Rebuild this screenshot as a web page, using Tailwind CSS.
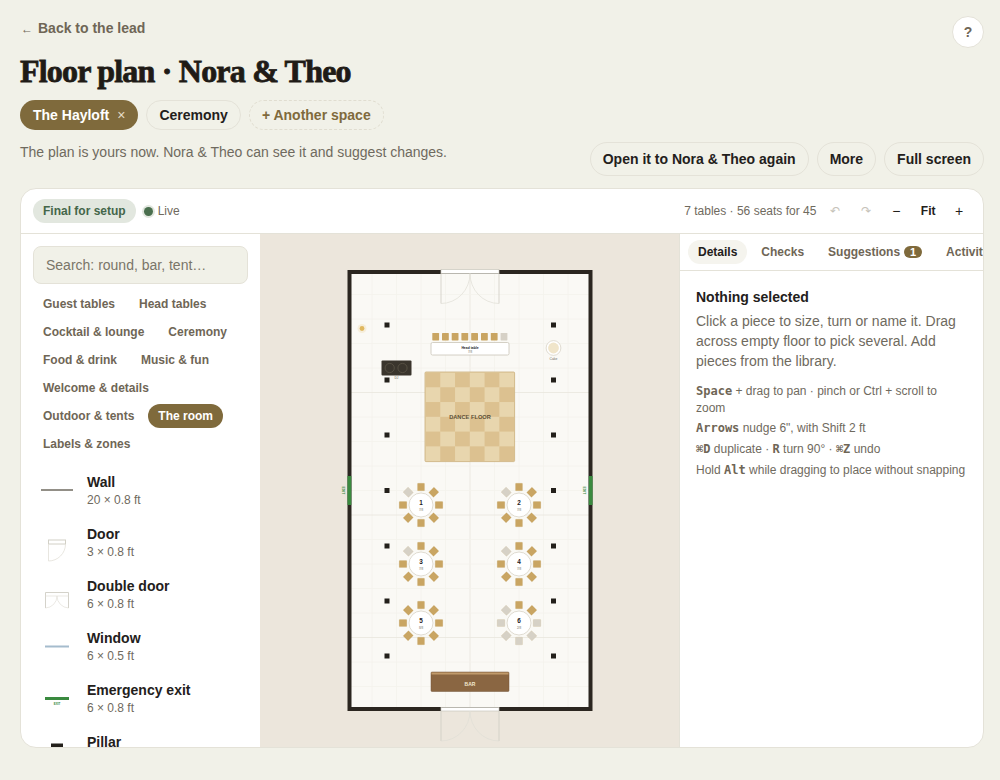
<!DOCTYPE html>
<html lang="en">
  <head>
    <meta charset="UTF-8" />
    <meta name="viewport" content="width=device-width, initial-scale=1.0" />
    <title>Floor plan · Nora &amp; Theo</title>
    <script src="https://cdn.jsdelivr.net/npm/@tailwindcss/browser@4"></script>
  </head>
  <body class="bg-[#f1f1e8] font-['Liberation_Sans',Arial,sans-serif] text-[#23201b] h-[780px] overflow-hidden">
    <div class="relative pl-5 pr-4 pt-5">
      <!-- Header -->
      <button class="absolute right-4 top-4 w-8 h-8 rounded-full bg-white border border-[#e4e2d8] text-sm font-bold text-[#6f6656]">?</button>
      <a class="flex items-center h-4 text-sm font-bold text-[#6f6656]"><span class="font-normal text-xs ml-px mr-[5px] w-3 mt-[2px]">←</span>Back to the lead</a>
      <h1 class="mt-4 h-[38px] leading-[38px] text-[32px] font-bold tracking-[-0.8px] font-['Liberation_Serif',serif] text-[#1f1b16] [-webkit-text-stroke:0.8px_#1f1b16]">Floor plan · Nora &amp; Theo</h1>
      <div class="mt-[10px] flex gap-2 h-[30px] text-sm font-bold">
        <div class="flex items-center rounded-full bg-[#7f6a3c] text-white pl-[13px] pr-[13px] gap-2">The Hayloft <span class="text-[#e4dcc8] font-normal">×</span></div>
        <div class="flex items-center rounded-full border border-[#e4e2d8] px-3">Ceremony</div>
        <div class="flex items-center rounded-full border border-dashed border-[#e0ddd0] px-3 text-[#7f6a3c]">+ Another space</div>
      </div>
      <div class="mt-3 flex justify-between items-start h-[34px]">
        <p class="text-sm leading-5 text-[#6f6a5e]">The plan is yours now. Nora &amp; Theo can see it and suggest changes.</p>
        <div class="flex gap-2 text-sm font-bold">
          <button class="h-[34px] px-3 rounded-full border border-[#e4e2d8]">Open it to Nora &amp; Theo again</button>
          <button class="h-[34px] px-3 rounded-full border border-[#e4e2d8]">More</button>
          <button class="h-[34px] px-3 rounded-full border border-[#e4e2d8]">Full screen</button>
        </div>
      </div>

      <!-- Planner card -->
      <div class="mt-3 h-[560px] bg-white rounded-2xl border border-[#e4e2d8] overflow-hidden flex flex-col">
        <div class="h-[45px] shrink-0 border-b border-[#e4e2d8] flex items-center pl-3 pr-[18px] text-xs">
          <span class="h-6 flex items-center px-[10px] rounded-full bg-[#e2e7df] text-[#44664a] font-bold">Final for setup</span>
          <span class="ml-2 w-[9px] h-[9px] rounded-full bg-[#4a6f4e] ring-2 ring-[#e2e7df]"></span>
          <span class="ml-[5px] text-[#6f6a5e]">Live</span>
          <span class="ml-auto text-[#6f6a5e]">7 tables · 56 seats for 45</span>
          <span class="ml-[13px] w-3 text-center text-[#c5c2b8]">↶</span>
          <span class="ml-[19px] w-3 text-center text-[#c5c2b8]">↷</span>
          <span class="ml-[18px] w-3 text-center text-sm">−</span>
          <span class="ml-[18.5px] font-bold">Fit</span>
          <span class="ml-[17.5px] w-3 text-center text-sm">+</span>
        </div>
        <div class="flex flex-1 min-h-0">
          <!-- Library -->
          <aside class="w-[239px] shrink-0 px-3 pt-3 overflow-hidden">
            <div class="h-[38px] w-[215px] flex items-center px-3 rounded-lg bg-[#f1f1e8] border border-[#e4e2d8] text-sm text-[#7a7568]">Search: round, bar, tent…</div>
            <div class="mt-2 flex flex-wrap gap-1 text-xs font-bold text-[#6f6656]">
              <span class="h-6 leading-6 px-[10px]">Guest tables</span>
              <span class="h-6 leading-6 px-[10px]">Head tables</span>
              <span class="h-6 leading-6 px-[10px]">Cocktail &amp; lounge</span>
              <span class="h-6 leading-6 px-[10px]">Ceremony</span>
              <span class="h-6 leading-6 px-[10px]">Food &amp; drink</span>
              <span class="h-6 leading-6 px-[10px]">Music &amp; fun</span>
              <span class="h-6 leading-6 px-[10px] mr-10">Welcome &amp; details</span>
              <span class="h-6 leading-6 px-[10px]">Outdoor &amp; tents</span>
              <span class="h-6 leading-6 px-[10px] rounded-full bg-[#7f6a3c] text-white">The room</span>
              <span class="h-6 leading-6 px-[10px] mr-10">Labels &amp; zones</span>
            </div>
            <ul class="mt-[17px] flex flex-col gap-[18px]">
              <li class="flex gap-[10px] pl-1 h-[34px]">
                <svg class="w-10 h-[34px] shrink-0 overflow-visible" viewBox="0 0 40 34"><line x1="4" y1="17" x2="36" y2="17" stroke="#77736a" stroke-width="1.6" /></svg>
                <div><div class="text-sm font-bold leading-[18px]">Wall</div><div class="mt-px text-xs leading-4 text-[#6f6a5e]">20 × 0.8 ft</div></div>
              </li>
              <li class="flex gap-[10px] pl-1 h-[34px]">
                <svg class="w-10 h-[34px] shrink-0 overflow-visible" viewBox="0 0 40 34"><rect x="11.5" y="15" width="17" height="4" fill="#fff" stroke="#d2d0c6" /><path d="M11.5 19V36M11.5 36A17 17 0 0 0 28.5 19" fill="none" stroke="#e2e0d8" stroke-width="0.8" /></svg>
                <div><div class="text-sm font-bold leading-[18px]">Door</div><div class="mt-px text-xs leading-4 text-[#6f6a5e]">3 × 0.8 ft</div></div>
              </li>
              <li class="flex gap-[10px] pl-1 h-[34px]">
                <svg class="w-10 h-[34px] shrink-0 overflow-visible" viewBox="0 0 40 34"><path d="M8.5 15.5H31.5M8.5 15.5V31M31.5 15.5V31" fill="none" stroke="#c9c7bd" stroke-width="0.8" /><path d="M8.5 19H31.5" fill="none" stroke="#e2e0d8" stroke-width="0.7" /><path d="M8.5 31A12 12 0 0 0 20 19A12 12 0 0 0 31.5 31" fill="none" stroke="#e2e0d8" stroke-width="0.7" /></svg>
                <div><div class="text-sm font-bold leading-[18px]">Double door</div><div class="mt-px text-xs leading-4 text-[#6f6a5e]">6 × 0.8 ft</div></div>
              </li>
              <li class="flex gap-[10px] pl-1 h-[34px]">
                <svg class="w-10 h-[34px] shrink-0 overflow-visible" viewBox="0 0 40 34"><line x1="8" y1="17.5" x2="32" y2="17.5" stroke="#a5bccd" stroke-width="2" /></svg>
                <div><div class="text-sm font-bold leading-[18px]">Window</div><div class="mt-px text-xs leading-4 text-[#6f6a5e]">6 × 0.5 ft</div></div>
              </li>
              <li class="flex gap-[10px] pl-1 h-[34px]">
                <svg class="w-10 h-[34px] shrink-0 overflow-visible" viewBox="0 0 40 34"><line x1="8" y1="17.5" x2="32" y2="17.5" stroke="#3a8a3f" stroke-width="3" /><text x="20" y="24" text-anchor="middle" font-size="3" font-weight="700" fill="#3a8a3f">EXIT</text></svg>
                <div><div class="text-sm font-bold leading-[18px]">Emergency exit</div><div class="mt-px text-xs leading-4 text-[#6f6a5e]">6 × 0.8 ft</div></div>
              </li>
              <li class="flex gap-[10px] pl-1 h-[34px]">
                <svg class="w-10 h-[34px] shrink-0 overflow-visible" viewBox="0 0 40 34"><rect x="14" y="10.5" width="12" height="12" fill="#23201b" /></svg>
                <div><div class="text-sm font-bold leading-[18px]">Pillar</div><div class="mt-px text-xs leading-4 text-[#6f6a5e]">1 × 1 ft</div></div>
              </li>
            </ul>
          </aside>

          <!-- Canvas -->
          <div class="w-[419px] shrink-0 bg-[#ece6dc]">
            <svg id="plan" class="block w-[419px] h-[514px]" viewBox="260 234 419 514" font-family="Liberation Sans, Arial, sans-serif"></svg>
          </div>

          <!-- Inspector -->
          <section class="w-[304px] shrink-0 border-l border-[#e4e2d8] overflow-hidden">
            <div class="h-[37px] border-b border-[#e4e2d8] flex items-center pl-2 text-xs font-bold text-[#6f6656] whitespace-nowrap">
              <span class="h-6 leading-6 px-[10px] rounded-full bg-[#f5f4ee] text-[#23201b]">Details</span>
              <span class="ml-1 h-6 leading-6 px-[10px]">Checks</span>
              <span class="ml-1 h-6 leading-6 px-[10px] flex items-center">Suggestions<span class="ml-1 w-[18px] h-3 leading-3 rounded-full bg-[#7f6a3c] text-white text-center text-[11px]">1</span></span>
              <span class="ml-1 h-6 leading-6 px-[10px]">Activity</span>
            </div>
            <div class="px-4 pt-4">
              <h3 class="text-sm font-bold leading-[20px]">Nothing selected</h3>
              <p class="mt-[4px] text-sm leading-5 text-[#6f6a5e] w-[272px]">Click a piece to size, turn or name it. Drag across empty floor to pick several. Add pieces from the library.</p>
              <div class="mt-3 text-xs leading-[17px] text-[#6f6a5e] w-[272px]">
                <p><b class="font-['DejaVu_Sans_Mono',monospace] text-[#6f6656]">Space</b> + drag to pan · pinch or Ctrl + scroll to zoom</p>
                <p class="mt-[3px]"><b class="font-['DejaVu_Sans_Mono',monospace] text-[#6f6656]">Arrows</b> nudge 6", with Shift 2 ft</p>
                <p class="mt-1"><b class="font-['DejaVu_Sans_Mono',monospace] text-[#6f6656]">⌘D</b> duplicate · <b class="font-['DejaVu_Sans_Mono',monospace] text-[#6f6656]">R</b> turn 90° · <b class="font-['DejaVu_Sans_Mono',monospace] text-[#6f6656]">⌘Z</b> undo</p>
                <p class="mt-1">Hold <b class="font-['DejaVu_Sans_Mono',monospace] text-[#6f6656]">Alt</b> while dragging to place without snapping</p>
              </div>
            </div>
          </section>
        </div>
      </div>
    </div>

    <script>
      const GOLD = "#c9a562";
      const GREY = "#d6d1c6";
      let s = "";

      // Doors sit just past the wall, so they are drawn from their hinge line
      function door(y) {
        const end = y + 30;
        return `<path d="M441 ${y}V${end}M499 ${y}V${end}" stroke="#cfcdc3" stroke-width="0.8" fill="none"/>
          <path d="M441 ${end}A29 30 0 0 0 470 ${y}A29 30 0 0 0 499 ${end}" stroke="#e0ded5" stroke-width="0.7" fill="none"/>`;
      }

      // Floor and grid
      s += `<rect x="349" y="272" width="242" height="437" fill="#faf9f5"/>`;
      for (let i = 1; i < 10; i++) {
        const x = 347.5 + i * 24.5;
        s += `<line x1="${x}" y1="274" x2="${x}" y2="707" stroke="${i === 5 ? "#e8e6dd" : "#f4f2ec"}" stroke-width="0.8"/>`;
      }
      for (let i = 1; i < 18; i++) {
        const y = 270 + i * 24.5;
        s += `<line x1="351" y1="${y}" x2="589" y2="${y}" stroke="${i % 5 === 0 ? "#e8e6dd" : "#f4f2ec"}" stroke-width="0.8"/>`;
      }

      // Walls, doors, exits
      s += `<rect x="349.5" y="272" width="241" height="437" fill="none" stroke="#2b2620" stroke-width="4"/>`;
      s += `<rect x="441" y="269.5" width="58" height="4" fill="#fff" stroke="#c9c7bd" stroke-width="0.7"/>` + door(273.5);
      s += `<rect x="441" y="707.5" width="58" height="3.5" fill="#fff" stroke="#c9c7bd" stroke-width="0.7"/>` + door(711);
      for (const [x, lx] of [[347.5, 342.2], [588.8, 583]]) {
        s += `<rect x="${x}" y="476" width="3.8" height="29" fill="#3a8a3f"/>`;
        s += `<text transform="translate(${lx} 490.5) rotate(90)" text-anchor="middle" font-size="3.5" font-weight="700" fill="#3a8a3f">EXIT</text>`;
      }

      // Pillars
      for (const y of [325, 380, 435, 490.5, 546, 601, 656]) {
        for (const x of [387, 553.5]) {
          s += `<rect x="${x - 2.5}" y="${y - 2.5}" width="5" height="5" fill="#23201b"/>`;
        }
      }

      // Dance floor
      s += `<rect x="425" y="372" width="89.6" height="89.6" fill="#e8d6ae" stroke="#c9ad7a" stroke-width="0.8" rx="1"/>`;
      for (let r = 0; r < 6; r++) {
        for (let c = 0; c < 6; c++) {
          if ((r + c) % 2 === 0) {
            s += `<rect x="${425.5 + c * 14.77}" y="${372.5 + r * 14.77}" width="14.77" height="14.77" fill="#dcc190"/>`;
          }
        }
      }
      s += `<text x="470" y="419" text-anchor="middle" font-size="5.7" font-weight="700" fill="#5c4f36">DANCE FLOOR</text>`;

      // Head table
      [435.7, 445.4, 455.1, 464.8, 474.6, 484.4, 494.2, 504].forEach((x, i) => {
        s += `<rect x="${x - 3.4}" y="333" width="6.8" height="7.4" rx="0.6" fill="${i === 7 ? GREY : GOLD}"/>`;
      });
      s += `<rect x="431" y="342.5" width="78" height="12.5" rx="1.5" fill="#fff" stroke="#c9c4b8" stroke-width="0.8"/>`;
      s += `<text x="470" y="348.5" text-anchor="middle" font-size="3.4" font-weight="700" fill="#23201b">Head table</text>`;
      s += `<text x="470" y="352.8" text-anchor="middle" font-size="3" fill="#6f6a5e">7/8</text>`;

      // DJ, cake, candle
      s += `<rect x="381.5" y="360.5" width="30" height="15" rx="1" fill="#3a352d"/>`;
      s += `<circle cx="389.7" cy="368" r="4.6" fill="none" stroke="#5c5548" stroke-width="0.8"/><circle cx="402.5" cy="368" r="4.6" fill="none" stroke="#5c5548" stroke-width="0.8"/>`;
      s += `<text x="396.5" y="379" text-anchor="middle" font-size="3.2" fill="#6f6a5e">DJ</text>`;
      s += `<circle cx="553.5" cy="348" r="7.4" fill="#fff" stroke="#d8d3c6" stroke-width="0.8"/><circle cx="553.5" cy="348" r="5.4" fill="#f0e5ca"/>`;
      s += `<text x="553.5" y="359.5" text-anchor="middle" font-size="3.4" fill="#6f6a5e">Cake</text>`;
      s += `<circle cx="362" cy="328.5" r="4.5" fill="#f6eedb"/><circle cx="362" cy="328.5" r="2.4" fill="#e0b860"/>`;

      // Round tables; angles are clockwise from the top chair
      const tables = [
        { n: 1, x: 421, y: 505, seated: "7/8", empty: [315] },
        { n: 2, x: 519, y: 505, seated: "7/8", empty: [315] },
        { n: 3, x: 421, y: 564, seated: "7/8", empty: [315] },
        { n: 4, x: 519, y: 564, seated: "7/8", empty: [315] },
        { n: 5, x: 421, y: 623, seated: "8/8", empty: [] },
        { n: 6, x: 519, y: 623, seated: "2/8", empty: [90, 135, 180, 225, 270, 315] },
      ];
      for (const t of tables) {
        for (let a = 0; a < 360; a += 45) {
          s += `<rect x="${t.x - 3.5}" y="${t.y - 21.8}" width="7" height="7.6" rx="0.5" fill="${t.empty.includes(a) ? GREY : GOLD}" stroke="#b8975a" stroke-opacity="0.35" stroke-width="0.4" transform="rotate(${a} ${t.x} ${t.y})"/>`;
        }
        s += `<circle cx="${t.x}" cy="${t.y}" r="12" fill="#fff" stroke="#d8d3c6" stroke-width="0.8"/>`;
        s += `<text x="${t.x}" y="${t.y}" text-anchor="middle" font-size="6.4" font-weight="700" fill="#23201b">${t.n}</text>`;
        s += `<text x="${t.x}" y="${t.y + 5.6}" text-anchor="middle" font-size="3" fill="#6f6a5e">${t.seated}</text>`;
      }

      // Bar
      s += `<rect x="431" y="672" width="78" height="19.5" rx="1" fill="#8a6642" stroke="#75563a" stroke-width="0.5"/>`;
      s += `<rect x="431.5" y="672.5" width="77" height="2" fill="#c09a6b"/>`;
      s += `<text x="470" y="686" text-anchor="middle" font-size="5" font-weight="700" fill="#f1e6d0">BAR</text>`;

      document.getElementById("plan").innerHTML = s;
    </script>
  </body>
</html>
